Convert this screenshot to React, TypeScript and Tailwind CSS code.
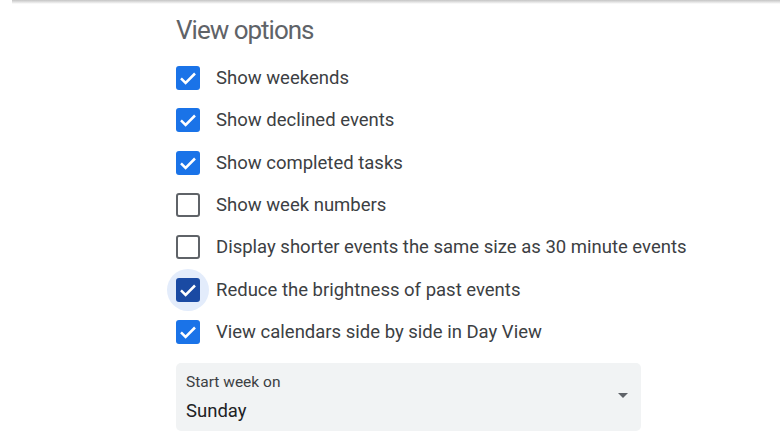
import React from "react";

const options = [
  { label: "Show weekends", checked: true },
  { label: "Show declined events", checked: true },
  { label: "Show completed tasks", checked: true },
  { label: "Show week numbers", checked: false },
  { label: "Display shorter events the same size as 30 minute events", checked: false },
  { label: "Reduce the brightness of past events", checked: true, focused: true },
  { label: "View calendars side by side in Day View", checked: true },
];

const Check = ({ checked, focused }: { checked: boolean; focused?: boolean }) => {
  return (
    <div className="relative w-[24px] h-[24px] flex-shrink-0">
      {focused && <span className="absolute -inset-[9px] rounded-full bg-[#e3ecfb]" />}
      {checked ? (
        <span
          className={`relative flex items-center justify-center w-[24px] h-[24px] rounded-[3px] ${
            focused ? "bg-[#1a4aa3]" : "bg-[#1a73e8]"
          }`}
        >
          <svg width="24" height="24" viewBox="0 0 24 24">
            <path d="M5 12.3l4.6 4.6L19 7.5" fill="none" stroke="#fff" strokeWidth="2.5" />
          </svg>
        </span>
      ) : (
        <span className="relative block w-[24px] h-[24px] rounded-[3px] border-[2.5px] border-[#5f6368]" />
      )}
    </div>
  );
};

export default function App() {
  return (
    <div className="w-[780px] h-[438px] bg-white overflow-hidden font-['Roboto',sans-serif]">
      <div className="h-[4px] ml-[12px] bg-gradient-to-b from-[#c4c4c4] to-white" />
      <div className="pl-[176px]">
        <h2 className="mt-[6px] h-[40px] text-[26px] leading-[40px] tracking-[-1px] text-[#5f6368] font-normal">
          View options
        </h2>
        <div className="mt-[7px] flex flex-col">
          {options.map((o) => (
            <div key={o.label} className="h-[42.33px] flex items-center gap-[16px]">
              <Check checked={o.checked} focused={o.focused} />
              <span className="text-[18.5px] text-[#3c4043] leading-none">{o.label}</span>
            </div>
          ))}
        </div>
        <div className="mt-[10px] w-[465px] h-[68px] rounded-[5px] bg-[#f1f3f4] relative pl-[10px] pt-[9px]">
          <div className="text-[15.5px] leading-[20px] text-[#3c4043]">Start week on</div>
          <div className="mt-[8px] text-[18.5px] leading-[22px] text-[#202124]">Sunday</div>
          <svg className="absolute right-[13px] top-[30px]" width="10" height="5" viewBox="0 0 10 5">
            <path d="M0 0h10L5 5z" fill="#5f6368" />
          </svg>
        </div>
      </div>
    </div>
  );
}
